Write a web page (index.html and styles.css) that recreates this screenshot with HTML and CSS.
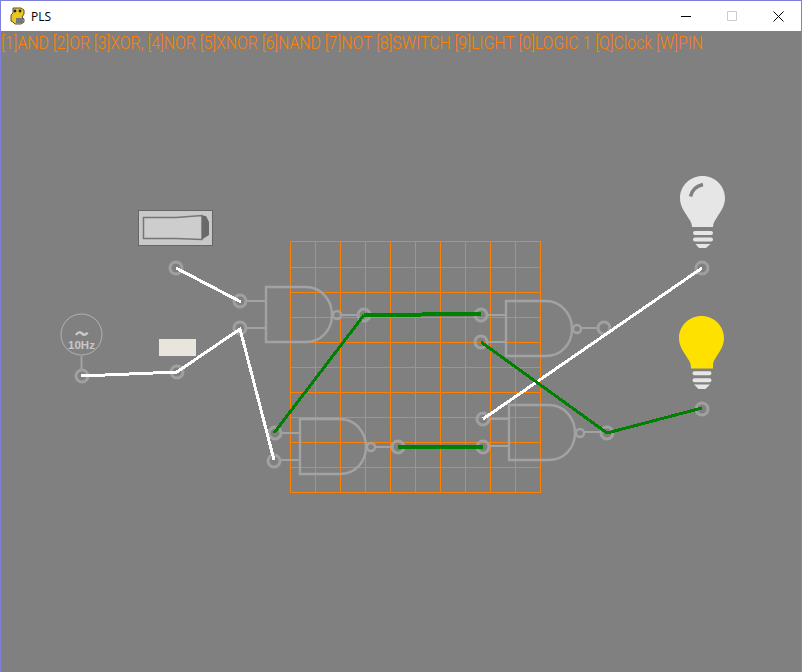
FILE: index.html
```html
<!DOCTYPE html>
<html lang="en">
<head>
<meta charset="utf-8">
<title>PLS</title>
<link rel="stylesheet" href="styles.css">
</head>
<body>
<div class="window">
  <header class="titlebar">
    <svg class="app-icon" width="15" height="18" viewBox="0 0 15 18">
      <path d="M3 1h8l3 2v4l-2 3 2 2v3l-3 2H5l-2-2-2-1V8l2-2z" fill="#e8c820" stroke="#5a5030"/>
      <circle cx="5" cy="4" r="1.400" fill="#222"/><circle cx="10" cy="4" r="1.400" fill="#222"/>
      <path d="M6 11h7v5H6z" fill="#777"/>
    </svg>
    <span class="app-title">PLS</span>
    <div class="controls">
      <span class="control"><svg width="10" height="10" viewBox="0 0 10 10"><path d="M0 5.500h10" stroke="#000"/></svg></span>
      <span class="control"><svg width="10" height="10" viewBox="0 0 10 10"><path d="M.5.5h9v9h-9z" fill="none" stroke="#ccc"/></svg></span>
      <span class="control"><svg width="11" height="11" viewBox="0 0 11 11"><path d="M.5.5l10 10M10.500.5l-10 10" stroke="#000"/></svg></span>
    </div>
  </header>
  <main class="canvas">
    <div class="menu">[1]AND [2]OR [3]XOR, [4]NOR [5]XNOR [6]NAND [7]NOT [8]SWITCH [9]LIGHT [0]LOGIC 1 [Q]Clock [W]PIN</div>
    <svg class="board" width="800" height="641" viewBox="0 31 800 641">
      <defs>
        <g id="nand">
          <path class="gate" d="M0 0H40C55 0 66 13 66 28S55 55 40 55H0Z"/>
          <circle class="gate" cx="71" cy="28" r="4"/>
        </g>
      </defs>

      <g class="grid">
        <path d="M290.500 241V493M315.500 241V493M340.500 241V493M365.500 241V493M390.500 241V493M415.500 241V493M440.500 241V493M465.500 241V493M490.500 241V493M515.500 241V493M540.500 241V493"/>
        <path d="M290 241.500H541M290 267.500H541M290 292.500H541M290 317.500H541M290 342.500H541M290 367.500H541M290 392.500H541M290 417.500H541M290 442.500H541M290 467.500H541M290 492.500H541"/>
      </g>

      <use href="#nand" x="266" y="287"/>
      <use href="#nand" x="506" y="301"/>
      <use href="#nand" x="300" y="419"/>
      <use href="#nand" x="509" y="405"/>

      <g class="lead">
        <path d="M246 301H266M246 328H266"/>
        <path d="M341 315H358"/>
        <path d="M280 433H300M280 460H300"/>
        <path d="M375 447H392"/>
        <path d="M486 315H506M486 342H506"/>
        <path d="M581 328H598"/>
        <path d="M488 419H509M488 446H509"/>
        <path d="M584 432H601"/>
        <path d="M81.500 356V369"/>
      </g>

      <g class="pin">
        <circle cx="176" cy="268" r="6"/><circle cx="240" cy="301" r="6"/>
        <circle cx="240" cy="328" r="6"/><circle cx="82" cy="376" r="6"/>
        <circle cx="177" cy="372" r="6"/><circle cx="364" cy="315" r="6"/>
        <circle cx="275" cy="433" r="6"/><circle cx="274" cy="461" r="6"/>
        <circle cx="398" cy="447" r="6"/><circle cx="481" cy="315" r="6"/>
        <circle cx="481" cy="342" r="6"/><circle cx="604" cy="328" r="6"/>
        <circle cx="483" cy="419" r="6"/><circle cx="483" cy="447" r="6"/>
        <circle cx="607" cy="433" r="6"/><circle cx="702" cy="268" r="6"/>
        <circle cx="702" cy="409" r="6"/>
      </g>

      <g class="wire-off">
        <path d="M176 268L241 302"/>
        <path d="M81 376L177 372L240 329L274 460"/>
        <path d="M483 419L702 268"/>
      </g>
      <g class="wire-on">
        <path d="M274 433L364 315"/>
        <path class="wide" d="M364 315L481 314"/>
        <path class="wide" d="M398 447L483 447"/>
        <path d="M481 342L607 433"/>
        <path d="M607 433L702 408"/>
      </g>

      <!-- switch -->
      <rect class="sw-frame" x="138.500" y="210.500" width="74" height="35"/>
      <rect class="sw-plate" x="140" y="212" width="71" height="32"/>
      <path class="sw-rocker" d="M143.500 217.500H176L202 215.500V239.500L176 238.500H143.500Z"/>
      <path class="sw-side" d="M202 215.500L206 216L209 222V235L202 239.500Z"/>

      <!-- logic 1 block -->
      <rect class="logic-one" x="159" y="339" width="37" height="17"/>

      <!-- clock -->
      <circle class="clock" cx="81.500" cy="334.500" r="20.500"/>
      <path class="clock-wave" d="M76 335C78 331.500 80.500 332 82 333.500S86 335.500 87.500 332.500"/>
      <text class="clock-label" x="81.500" y="349">10Hz</text>

      <!-- off bulb -->
      <path class="bulb-off" d="M702.500 176C715 176 725 186 725 198C725 207 720 212 716 219C714 222 713 224 713 227H692C692 224 691 222 689 219C685 212 680 207 680 198C680 186 690 176 702.500 176Z"/>
      <path class="bulb-shine" d="M690.500 196.500C692 190 696 186 703 184.500"/>
      <path class="bulb-base" d="M695 233H711M695 239.500H711"/>
      <path class="bulb-tip" d="M695.500 244H710.500L706 248H699Z"/>

      <!-- on bulb -->
      <path class="bulb-on" d="M701.500 316C714 316 724 326 724 338C724 347 719 352 715 359C713 362 713 364 713 368.500H691C691 364 690 362 688 359C684 352 679 347 679 338C679 326 689 316 701.500 316Z"/>
      <path class="bulb-base" d="M694.500 373.300H709.500M694.500 380.300H709.500"/>
      <path class="bulb-tip" d="M694 384.500H710L705.500 389H698.500Z"/>
    </svg>
  </main>
</div>
</body>
</html>
```
FILE: styles.css
```css
* { box-sizing: border-box; }
html, body { margin: 0; padding: 0; }
body { width: 802px; height: 672px; overflow: hidden; }
.window {
  width: 802px;
  height: 672px;
  display: flex;
  flex-direction: column;
  border: 1px solid #7f7fdc;
  border-bottom: 0;
  background: #808080;
}
.titlebar {
  height: 30px;
  flex: none;
  display: flex;
  align-items: center;
  background: #fff;
  padding-left: 9px;
  font: 12px "Open Sans", "Noto Sans", sans-serif;
  color: #000;
}
.app-icon { margin-right: 6px; }
.app-title { font-size: 12px; }
.controls { margin-left: auto; display: flex; }
.control { width: 46px; height: 30px; display: flex; align-items: center; justify-content: center; }
.canvas { position: relative; flex: 1; }
.menu {
  position: relative;
  z-index: 1;
  padding-top: 2px;
  font: 300 18px/19px Roboto, "Liberation Sans", sans-serif;
  color: #ff8000;
  white-space: nowrap;
  width: max-content;
  transform: scaleX(.88);
  transform-origin: left top;
}
.board { position: absolute; left: -1px; top: 0; }
.gate { fill: none; stroke: #a2a2a2; stroke-width: 2.400; }
.lead { fill: none; stroke: #a2a2a2; stroke-width: 2; }
.pin circle { fill: none; stroke: #a0a0a0; stroke-width: 3; }
.grid path { stroke: #ff8000; stroke-width: 1; fill: none; }
.wire-off path { stroke: #fff; stroke-width: 3; fill: none; shape-rendering: crispEdges; }
.wire-on path { stroke: #008000; stroke-width: 3; fill: none; shape-rendering: crispEdges; }
.wire-on .wide { stroke-width: 4; }
.sw-frame { fill: #c8c8c8; stroke: #666; stroke-width: 1; }
.sw-plate { fill: #c8c8c8; }
.sw-rocker { fill: #cdcdcd; stroke: #767676; stroke-width: 1.500; }
.sw-side { fill: #6a6a6a; }
.logic-one { fill: #e8e6dc; }
.clock { fill: none; stroke: #b4b4b4; stroke-width: 1; }
.clock-wave { fill: none; stroke: #c8c8c8; stroke-width: 2.500; }
.clock-label { font: bold 11.500px "Liberation Sans", sans-serif; fill: #c8c8c8; text-anchor: middle; }
.bulb-off { fill: #e6e6e6; }
.bulb-shine { fill: none; stroke: #808080; stroke-width: 3.500; }
.bulb-base { fill: none; stroke: #e6e6e6; stroke-width: 4; stroke-linecap: round; }
.bulb-tip { fill: #e6e6e6; }
.bulb-on { fill: #ffe100; }
```
